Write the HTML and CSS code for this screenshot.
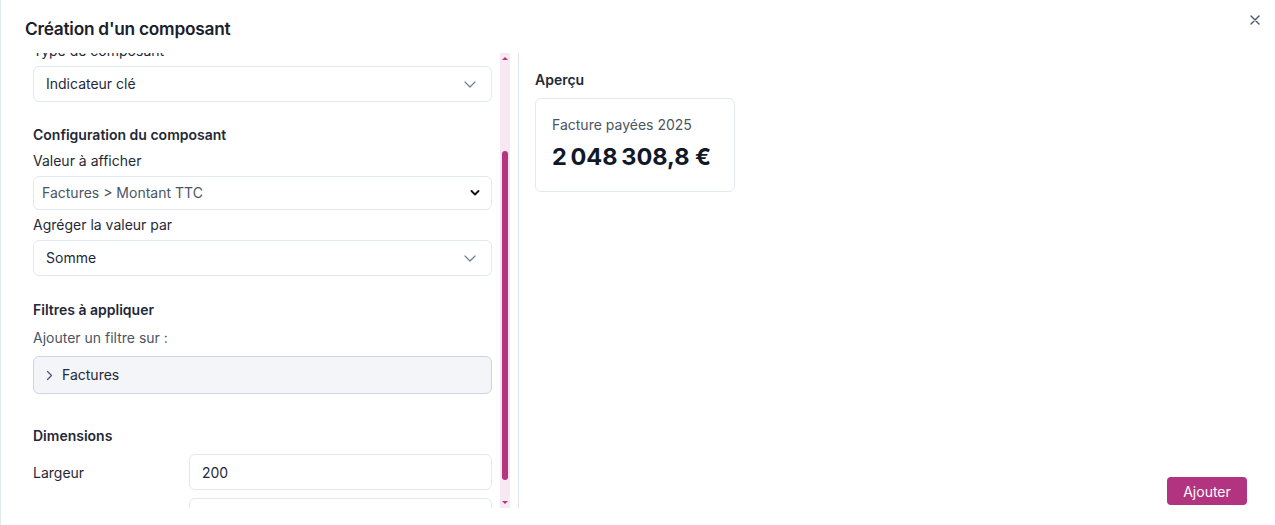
FILE: index.html
```html
<!DOCTYPE html>
<html lang="fr">
<head>
<meta charset="utf-8">
<title>Création d'un composant</title>
<link rel="stylesheet" href="styles.css">
</head>
<body>
<div class="modal">
  <header class="modal-header">
    <h1 class="modal-title">Création d'un composant</h1>
    <button class="close-btn" aria-label="Fermer">
      <svg width="10" height="10" viewBox="0 0 10 10"><path d="M1 1 L9 9 M9 1 L1 9" stroke="#4a5568" stroke-width="1.4" stroke-linecap="round"/></svg>
    </button>
  </header>
  <div class="modal-body">
    <div class="left-col">
      <div class="viewport">
        <div class="form">
          <div class="field">
            <label class="label">Type de composant</label>
            <div class="select">
              <span>Indicateur clé</span>
              <svg class="chev" width="12" height="7" viewBox="0 0 12 7"><path d="M1 1 L6 6 L11 1" fill="none" stroke="#718096" stroke-width="1.2" stroke-linecap="round" stroke-linejoin="round"/></svg>
            </div>
          </div>

          <h2 class="section-title s-config">Configuration du composant</h2>
          <div class="field">
            <label class="label">Valeur à afficher</label>
            <div class="select native">
              <span>Factures &gt; Montant TTC</span>
              <svg class="chev" width="10" height="6" viewBox="0 0 10 6"><path d="M1.5 1 L5 4.5 L8.5 1" fill="none" stroke="#111" stroke-width="1.8" stroke-linecap="round" stroke-linejoin="round"/></svg>
            </div>
          </div>
          <div class="field f-agg">
            <label class="label">Agréger la valeur par</label>
            <div class="select">
              <span>Somme</span>
              <svg class="chev" width="12" height="7" viewBox="0 0 12 7"><path d="M1 1 L6 6 L11 1" fill="none" stroke="#718096" stroke-width="1.2" stroke-linecap="round" stroke-linejoin="round"/></svg>
            </div>
          </div>

          <h2 class="section-title s-filters">Filtres à appliquer</h2>
          <p class="hint">Ajouter un filtre sur :</p>
          <div class="accordion">
            <svg width="7" height="11" viewBox="0 0 7 11"><path d="M1.5 1.5 L5.5 5.5 L1.5 9.5" fill="none" stroke="#4a5568" stroke-width="1.2" stroke-linecap="round" stroke-linejoin="round"/></svg>
            <span>Factures</span>
          </div>

          <h2 class="section-title s-dims">Dimensions</h2>
          <div class="dim-row">
            <span class="dim-label">Largeur</span>
            <div class="input">200</div>
          </div>
          <div class="dim-row">
            <span class="dim-label">Hauteur</span>
            <div class="input">120</div>
          </div>
        </div>
      </div>
      <div class="scrollbar">
        <span class="arrow up"></span>
        <div class="track"><div class="thumb"></div></div>
        <span class="arrow down"></span>
      </div>
    </div>
    <div class="divider"></div>
    <div class="right-col">
      <h2 class="preview-title">Aperçu</h2>
      <div class="kpi-card">
        <div class="kpi-label">Facture payées 2025</div>
        <div class="kpi-value">2&#8239;048&#8239;308,8&nbsp;€</div>
      </div>
      <div class="actions">
        <button class="btn-primary">Ajouter</button>
      </div>
    </div>
  </div>
</div>
</body>
</html>
```

FILE: styles.css
```css
* { box-sizing: border-box; }
html, body { margin: 0; padding: 0; background: #fff; }
body {
  font-family: Inter, "Noto Sans", "Liberation Sans", sans-serif;
  color: #1f2937;
  font-size: 14px;
}
.modal {
  width: 1275px;
  height: 525px;
  border-left: 1px solid #e2e8f0;
  background: #fff;
  position: relative;
  overflow: hidden;
}
.modal-header {
  height: 53px;
  padding: 17px 0 0 24px;
}
.modal-title {
  margin: 0;
  font-size: 17.3px;
  line-height: 24px;
  font-weight: 600;
  color: #1a202c;
  letter-spacing: -0.25px;
}
.close-btn {
  position: absolute;
  top: 15px;
  right: 15px;
  width: 10px;
  height: 10px;
  padding: 0;
  border: 0;
  background: none;
  display: flex;
}
.modal-body {
  display: flex;
  height: 455px;
  padding-left: 32px;
}
.left-col {
  display: flex;
  width: 477px;
  gap: 8px;
}
.viewport {
  width: 459px;
  height: 455px;
  overflow: hidden;
}
.form {
  margin-top: -12px;
  display: flex;
  flex-direction: column;
}
.field { display: flex; flex-direction: column; gap: 5px; }
.label {
  font-size: 14px;
  line-height: 20px;
  color: #1f2937;
}
.select {
  height: 36px;
  border: 1px solid #e2e8f0;
  border-radius: 6px;
  display: flex;
  align-items: center;
  justify-content: space-between;
  padding: 0 15px 0 12px;
  font-size: 14px;
  color: #1f2937;
  background: #fff;
}
.select span { margin-top: -1px; }
.select.native {
  height: 34px;
  padding: 0 11px 0 8px;
  color: #4b5563;
}
.section-title {
  margin: 0;
  font-size: 14px;
  line-height: 20px;
  font-weight: 600;
  color: #1f2937;
}
.s-config { margin-top: 23px; margin-bottom: 6px; }
.f-agg { margin-top: 5px; }
.s-filters { margin-top: 24px; }
.hint {
  margin: 8px 0 8px;
  font-size: 14px;
  line-height: 20px;
  color: #4b5563;
}
.accordion {
  height: 38px;
  border: 1px solid #cbd5e1;
  border-radius: 6px;
  background: #f3f5f8;
  display: flex;
  align-items: center;
  gap: 9px;
  padding-left: 12px;
  font-size: 14px;
  color: #1f2937;
}
.accordion span { margin-top: -1px; }
.s-dims { margin-top: 32px; margin-bottom: 8px; }
.dim-row {
  display: flex;
  align-items: center;
  margin-bottom: 8px;
}
.dim-label {
  width: 156px;
  font-size: 14px;
  color: #1f2937;
}
.input {
  flex: 1;
  height: 36px;
  border: 1px solid #e2e8f0;
  border-radius: 6px;
  display: flex;
  align-items: center;
  padding-left: 12px;
  font-size: 14px;
  color: #1f2937;
}
.scrollbar {
  width: 10px;
  height: 455px;
  background: #f8e8f2;
  display: flex;
  flex-direction: column;
  align-items: center;
}
.arrow { width: 0; height: 0; border-left: 3px solid transparent; border-right: 3px solid transparent; }
.arrow.up { border-bottom: 3px solid #b5357f; margin: 4px 0 3px; }
.arrow.down { border-top: 3px solid #b5357f; margin: 3px 0 4px; }
.track { flex: 1; width: 100%; display: flex; flex-direction: column; align-items: center; }
.thumb {
  width: 6px;
  height: 329px;
  margin-top: 88px;
  border-radius: 3px;
  background: #b5357f;
}
.divider {
  width: 1px;
  margin-left: 8px;
  background: #dde4ec;
  height: 455px;
}
.right-col {
  flex: 1;
  display: flex;
  flex-direction: column;
  padding: 17px 28px 3px 16px;
}
.preview-title {
  margin: 0 0 8px;
  font-size: 14px;
  line-height: 20px;
  font-weight: 600;
  color: #1f2937;
}
.kpi-card {
  width: 200px;
  height: 94px;
  border: 1px solid #e2e8f0;
  border-radius: 6px;
  padding: 16px 16px 0;
}
.kpi-label {
  font-size: 14px;
  line-height: 20px;
  color: #4b5563;
}
.kpi-value {
  margin-top: 7px;
  font-size: 23.5px;
  line-height: 30px;
  font-weight: 700;
  color: #111827;
  letter-spacing: -1.4px;
}
.actions {
  margin-top: auto;
  display: flex;
  justify-content: flex-end;
}
.btn-primary {
  width: 80px;
  height: 28px;
  border: 0;
  border-radius: 4px;
  background: #b23380;
  color: #fff;
  font-family: inherit;
  font-size: 14px;
}
```
